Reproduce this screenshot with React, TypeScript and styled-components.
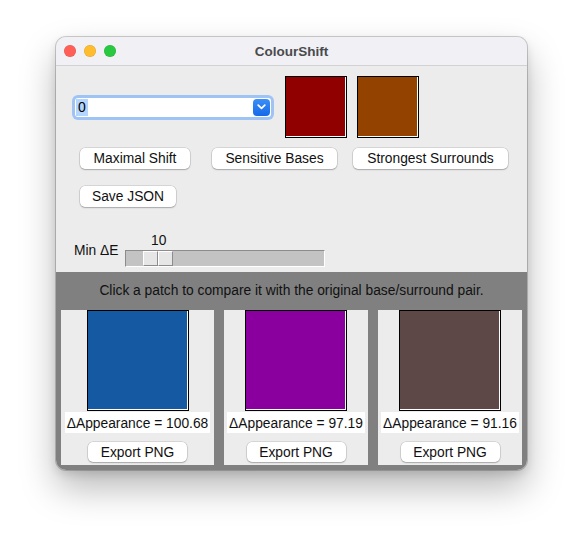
import styled, { createGlobalStyle } from "styled-components";

const GlobalStyle = createGlobalStyle`
    html, body {
        margin: 0;
        padding: 0;
        background: #ffffff;
    }
    body {
        font-family: "Liberation Sans", Arial, sans-serif;
        font-size: 13.8px;
        color: #111111;
    }
`;

const Page = styled.div`
    width: 583px;
    height: 545px;
    padding: 37px 0 0 56px;
    box-sizing: border-box;
`;

const Window = styled.div`
    width: 471px;
    height: 433px;
    display: flex;
    flex-direction: column;
    border-radius: 10px;
    overflow: hidden;
    background: #ececec;
    box-shadow: 0 0 0 1px rgba(0, 0, 0, 0.18), 0 18px 36px rgba(0, 0, 0, 0.28), 0 4px 10px rgba(0, 0, 0, 0.12);
`;

const TitleBar = styled.div`
    height: 28px;
    flex-shrink: 0;
    position: relative;
    display: flex;
    align-items: center;
    justify-content: center;
    background: #f0f0f5;
    border-bottom: 1px solid #d2d2d4;
`;

const Lights = styled.div`
    position: absolute;
    left: 8px;
    top: 8px;
    display: flex;
    gap: 8px;
`;

const Light = styled.span<{ $c: string }>`
    width: 12px;
    height: 12px;
    border-radius: 50%;
    background: ${(p) => p.$c};
    box-shadow: inset 0 0 0 0.5px rgba(0, 0, 0, 0.12);
`;

const Title = styled.div`
    font-weight: bold;
    font-size: 13.5px;
    color: #4a4a4c;
`;

const Controls = styled.div`
    padding: 10px 0 0 16px;
    height: 206px;
    box-sizing: border-box;
    flex-shrink: 0;
`;

const TopRow = styled.div`
    display: flex;
    align-items: center;
`;

const Combo = styled.div`
    width: 196px;
    height: 19px;
    margin: 0 14px 0 3px;
    background: #ffffff;
    border-radius: 3px;
    box-shadow: 0 0 0 3px #9fc4f4;
    display: flex;
    align-items: center;
    justify-content: space-between;
    padding-left: 1px;
    box-sizing: border-box;
`;

const ComboValue = styled.span`
    background: #b4d5fe;
    padding: 0 2px;
    line-height: 17px;
    font-size: 14px;
    color: #000;
`;

const ComboArrow = styled.div`
    width: 17px;
    height: 17px;
    margin-right: 1px;
    border-radius: 4px;
    background: linear-gradient(#3b8ff7, #1668e8);
    display: flex;
    align-items: center;
    justify-content: center;
`;

const Swatch = styled.div<{ $c: string; $w: number; $h: number }>`
    width: ${(p) => p.$w}px;
    height: ${(p) => p.$h}px;
    box-sizing: border-box;
    background: ${(p) => p.$c};
    border: 1px solid #000000;
    box-shadow: inset -1px -1px 0 #ffffff;
    flex-shrink: 0;
`;

const SwatchGap = styled.div`
    width: 10px;
`;

const ButtonRow = styled.div<{ $top: number }>`
    display: flex;
    margin-top: ${(p) => p.$top}px;
    padding-left: 8px;
`;

const Button = styled.div<{ $w: number; $gap?: number }>`
    width: ${(p) => p.$w}px;
    height: 21px;
    margin-right: ${(p) => p.$gap ?? 0}px;
    box-sizing: border-box;
    background: #ffffff;
    border-radius: 5px;
    box-shadow: 0 0 0 0.5px rgba(0, 0, 0, 0.18), 0 1px 1.5px rgba(0, 0, 0, 0.22);
    display: flex;
    align-items: center;
    justify-content: center;
    font-size: 13.8px;
    color: #111;
    flex-shrink: 0;
    white-space: nowrap;
`;

const SliderRow = styled.div`
    display: flex;
    align-items: center;
    margin-top: 27px;
    padding-left: 2px;
`;

const SliderLabel = styled.span`
    width: 51px;
    font-size: 13.8px;
`;

const Scale = styled.div`
    display: flex;
    flex-direction: column;
    width: 200px;
`;

const ScaleValue = styled.div<{ $x: number }>`
    height: 16px;
    line-height: 14px;
    padding-left: ${(p) => p.$x}px;
    font-size: 13.8px;
`;

const Trough = styled.div`
    height: 17px;
    box-sizing: border-box;
    background: #c3c3c3;
    border-top: 1px solid #8c8c8c;
    border-left: 1px solid #8c8c8c;
    border-right: 1px solid #ffffff;
    border-bottom: 1px solid #ffffff;
    padding-left: 17px;
`;

const Thumb = styled.div`
    width: 30px;
    height: 15px;
    display: flex;
`;

const ThumbHalf = styled.div`
    flex: 1;
    background: #e6e6e6;
    border-top: 1px solid #ffffff;
    border-left: 1px solid #ffffff;
    border-right: 1px solid #8c8c8c;
    border-bottom: 1px solid #8c8c8c;
    box-sizing: border-box;
`;

const Results = styled.div`
    flex: 1;
    background: #808080;
    padding: 0 5px 5px;
    display: flex;
    flex-direction: column;
`;

const Hint = styled.div`
    height: 38px;
    line-height: 38px;
    text-align: center;
    font-size: 13.8px;
    color: #111;
    white-space: nowrap;
`;

const Panels = styled.div`
    flex: 1;
    display: flex;
    gap: 10px;
`;

const Panel = styled.div<{ $w: number }>`
    width: ${(p) => p.$w}px;
    flex-shrink: 0;
    background: #ececec;
    display: flex;
    flex-direction: column;
    align-items: center;
`;

const Caption = styled.div`
    margin-top: 1px;
    height: 21px;
    line-height: 23px;
    padding: 0 2px;
    box-sizing: border-box;
    background: #ffffff;
    font-size: 13.8px;
    white-space: nowrap;
    overflow: hidden;
`;

const PanelButton = styled(Button)`
    height: 20px;
    margin-top: 9px;
`;

const results = [
    { color: "#1459a2", value: "100.68", width: 153 },
    { color: "#8a009f", value: "97.19", width: 144 },
    { color: "#5d4847", value: "91.16", width: 144 },
];

function Chevron() {
    return (
        <svg width="9" height="6" viewBox="0 0 9 6">
            <path d="M1.2 1.2 L4.5 4.4 L7.8 1.2" fill="none" stroke="#ffffff" strokeWidth="1.7" strokeLinecap="round" strokeLinejoin="round" />
        </svg>
    );
}

function App() {
    return (
        <Page>
            <GlobalStyle />
            <Window>
                <TitleBar>
                    <Lights>
                        <Light $c="#ff5f57" />
                        <Light $c="#febc2e" />
                        <Light $c="#28c840" />
                    </Lights>
                    <Title>ColourShift</Title>
                </TitleBar>
                <Controls>
                    <TopRow>
                        <Combo>
                            <ComboValue>0</ComboValue>
                            <ComboArrow>
                                <Chevron />
                            </ComboArrow>
                        </Combo>
                        <Swatch $c="#900000" $w={62} $h={62} />
                        <SwatchGap />
                        <Swatch $c="#944200" $w={62} $h={62} />
                    </TopRow>
                    <ButtonRow $top={10}>
                        <Button $w={110} $gap={22}>Maximal Shift</Button>
                        <Button $w={125} $gap={16}>Sensitive Bases</Button>
                        <Button $w={155}>Strongest Surrounds</Button>
                    </ButtonRow>
                    <ButtonRow $top={17}>
                        <Button $w={96}>Save JSON</Button>
                    </ButtonRow>
                    <SliderRow>
                        <SliderLabel>Min ΔE</SliderLabel>
                        <Scale>
                            <ScaleValue $x={26}>10</ScaleValue>
                            <Trough>
                                <Thumb>
                                    <ThumbHalf />
                                    <ThumbHalf />
                                </Thumb>
                            </Trough>
                        </Scale>
                    </SliderRow>
                </Controls>
                <Results>
                    <Hint>Click a patch to compare it with the original base/surround pair.</Hint>
                    <Panels>
                        {results.map((r) => (
                            <Panel key={r.value} $w={r.width}>
                                <Swatch $c={r.color} $w={102} $h={101} />
                                <Caption>ΔAppearance = {r.value}</Caption>
                                <PanelButton $w={99}>Export PNG</PanelButton>
                            </Panel>
                        ))}
                    </Panels>
                </Results>
            </Window>
        </Page>
    );
}

export default App;
